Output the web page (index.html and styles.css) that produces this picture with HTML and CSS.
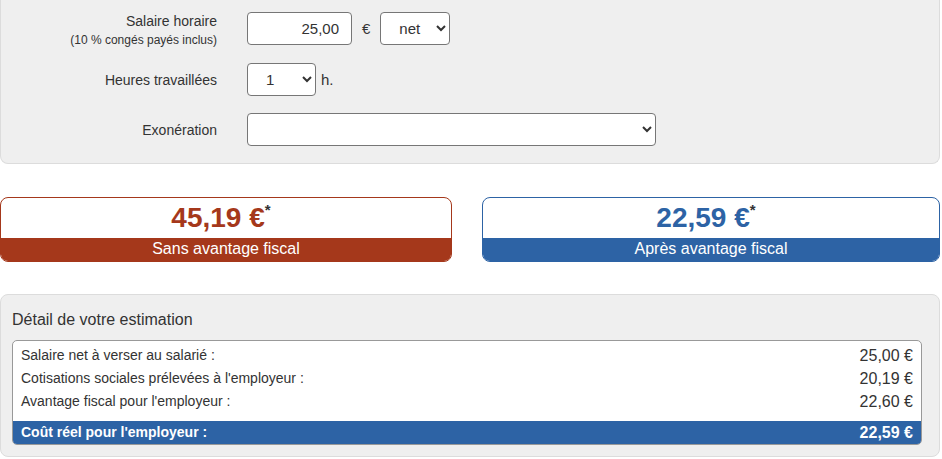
FILE: index.html
```html
<!DOCTYPE html>
<html lang="fr">
<head>
    <meta charset="UTF-8">
    <meta name="viewport" content="width=device-width, initial-scale=1.0">
    <title>Simulateur coût employeur</title>
    <link rel="stylesheet" href="styles.css">
</head>
<body>
    <div class="simulator">
        <!-- paramètres -->
        <div class="form-panel">
            <div class="row row-double">
                <div class="label">
                    Salaire horaire
                    <small>(10 % congés payés inclus)</small>
                </div>
                <input type="text" class="amount" value="25,00">
                <span class="unit unit-euro">€</span>
                <select class="sel-type">
                    <option>net</option>
                    <option>brut</option>
                </select>
            </div>
            <div class="row">
                <div class="label">Heures travaillées</div>
                <select class="sel-hours">
                    <option>1</option>
                    <option>2</option>
                    <option>3</option>
                </select>
                <span class="unit unit-h">h.</span>
            </div>
            <div class="row">
                <div class="label">Exonération</div>
                <select class="sel-exo">
                    <option></option>
                </select>
            </div>
        </div>

        <!-- résultats -->
        <div class="results">
            <div class="result-box red">
                <div class="amount-big">45,19 €<sup>*</sup></div>
                <div class="band">Sans avantage fiscal</div>
            </div>
            <div class="result-box blue">
                <div class="amount-big">22,59 €<sup>*</sup></div>
                <div class="band">Après avantage fiscal</div>
            </div>
        </div>

        <!-- détail -->
        <div class="detail-panel">
            <h2>Détail de votre estimation</h2>
            <div class="detail-table">
                <div class="line"><span>Salaire net à verser au salarié :</span><span class="val">25,00 €</span></div>
                <div class="line"><span>Cotisations sociales prélevées à l'employeur :</span><span class="val">20,19 €</span></div>
                <div class="line"><span>Avantage fiscal pour l'employeur :</span><span class="val">22,60 €</span></div>
                <div class="line total"><span>Coût réel pour l'employeur :</span><span class="val">22,59 €</span></div>
            </div>
        </div>
    </div>
</body>
</html>
```

FILE: styles.css
```css
body {
    font-family: "Liberation Sans", Arial, sans-serif;
    color: #333;
    background-color: #fff;
    margin: 0;
    padding: 0;
}
.simulator {
    width: 940px;
}
.form-panel {
    background-color: #efefef;
    border: 1px solid #dcdcdc;
    border-top: none;
    border-radius: 0 0 8px 8px;
    padding: 12px 0 17px;
}
.row {
    display: flex;
    align-items: center;
    height: 33px;
    margin-bottom: 17px;
}
.row:first-child {
    margin-bottom: 18px;
}
.row:last-child {
    margin-bottom: 0;
}
.label {
    width: 216px;
    margin-right: 30px;
    text-align: right;
    font-size: 14px;
    line-height: 18px;
}
.row-double .label {
    align-self: flex-start;
}
.label small {
    display: block;
    font-size: 12px;
    line-height: 14px;
    margin-top: 3px;
}
input.amount,
select {
    box-sizing: border-box;
    height: 33px;
    border: 1px solid #767676;
    border-radius: 4px;
    background-color: #fff;
    font-family: "Liberation Sans", Arial, sans-serif;
    font-size: 15px;
    color: #333;
}
input.amount {
    width: 105px;
    text-align: right;
    padding: 0 12px 0 4px;
}
select {
    padding: 0 0 0 14px;
}
.sel-type {
    width: 70px;
}
.sel-hours {
    width: 69px;
}
.sel-exo {
    width: 409px;
}
.unit {
    font-size: 15px;
}
.unit-euro {
    margin: 0 10px;
}
.unit-h {
    margin-left: 5px;
}

.results {
    display: grid;
    grid-template-columns: 452px 1fr;
    column-gap: 30px;
    margin-top: 33px;
}
.result-box {
    border: 1px solid;
    border-radius: 8px;
    overflow: hidden;
    text-align: center;
    background-color: #fff;
}
.amount-big {
    height: 40px;
    line-height: 40px;
    font-size: 28px;
    font-weight: bold;
    padding-right: 10px;
}
.amount-big sup {
    font-size: 15px;
    color: #333;
    line-height: 0;
    position: relative;
    top: -2px;
}
.band {
    height: 23px;
    line-height: 22px;
    font-size: 16px;
    color: #fff;
}
.red {
    border-color: #a5381b;
    color: #a5381b;
}
.red .band {
    background-color: #a5381b;
}
.blue {
    border-color: #2d63a5;
    color: #2d63a5;
}
.blue .band {
    background-color: #2d63a5;
}

.detail-panel {
    margin-top: 32px;
    background-color: #efefef;
    border: 1px solid #dcdcdc;
    border-radius: 8px;
    padding: 14px 17px 11px 11px;
}
.detail-panel h2 {
    margin: 0 0 9px;
    font-size: 16px;
    font-weight: normal;
    line-height: 22px;
}
.detail-table {
    background-color: #fff;
    border: 1px solid #999;
    border-radius: 5px;
    overflow: hidden;
    padding-top: 3px;
}
.line {
    display: flex;
    justify-content: space-between;
    height: 23px;
    line-height: 23px;
    padding: 0 8px;
    font-size: 14px;
}
.line .val {
    font-size: 16px;
}
.line.total {
    margin-top: 8px;
    background-color: #2d63a5;
    color: #fff;
    font-weight: bold;
}
```
